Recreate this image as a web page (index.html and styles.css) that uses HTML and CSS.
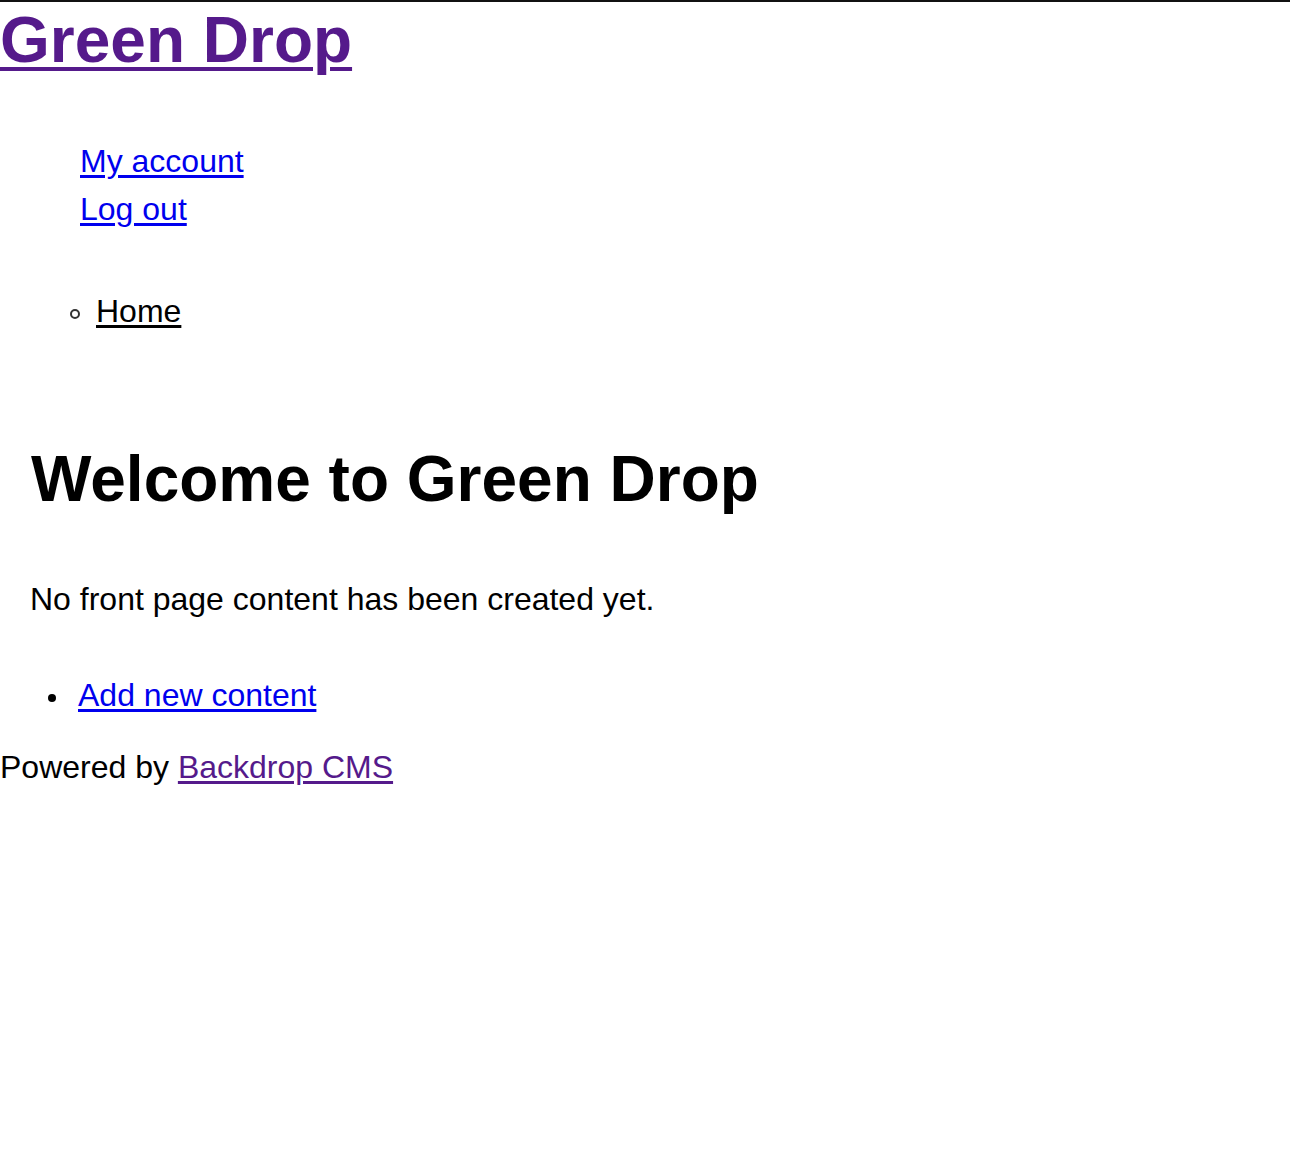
FILE: index.html
```html
<!DOCTYPE html>
<html lang="en">
<head>
<meta charset="utf-8">
<title>Welcome to Green Drop | Green Drop</title>
<link rel="stylesheet" href="styles.css">
</head>
<body>
<header class="site-header">
  <h1 class="site-name"><a href="#" class="visited">Green Drop</a></h1>
  <ul class="user-menu">
    <li><a href="#">My account</a></li>
    <li><a href="#">Log out</a></li>
  </ul>
  <ul class="main-menu">
    <li><a href="#">Home</a></li>
  </ul>
</header>
<main class="content">
  <h2 class="page-title">Welcome to Green Drop</h2>
  <p class="empty">No front page content has been created yet.</p>
  <ul class="actions">
    <li><a href="#">Add new content</a></li>
  </ul>
</main>
<footer class="site-footer">Powered by <a href="#" class="visited">Backdrop CMS</a></footer>
</body>
</html>
```

FILE: styles.css
```css
html { background: #fff; }
body {
  margin: 0;
  border-top: 2px solid #111;
  font-family: "Liberation Sans", Arial, Helvetica, sans-serif;
  font-size: 32px;
  line-height: 48px;
  color: #000;
}
a { color: #0000ee; text-decoration: underline; text-underline-offset: 3px; }
a.visited { color: #551a8b; }

.site-name {
  margin: 0;
  font-size: 64px;
  line-height: 76px;
  font-weight: bold;
}
.site-name a { text-decoration-thickness: 4px; text-underline-offset: 5px; }

.user-menu {
  list-style: none;
  margin: 59px 0 0;
  padding: 0 0 0 80px;
}

.main-menu {
  list-style: none;
  margin: 54px 0 0;
  padding: 0 0 0 70px;
}
.main-menu li::before {
  content: "";
  display: inline-block;
  box-sizing: border-box;
  width: 10px;
  height: 10px;
  border: 2.5px solid #333;
  border-radius: 50%;
  margin-right: 16px;
  vertical-align: middle;
}
.main-menu a { color: #000; }

.content { padding: 0; }
.page-title {
  margin: 106px 0 0;
  padding-left: 31px;
  font-size: 64px;
  line-height: 76px;
  font-weight: bold;
}
.empty {
  margin: 58px 0 0;
  padding-left: 30px;
}
.actions {
  list-style: none;
  margin: 48px 0 0;
  padding: 0 0 0 48px;
}
.actions li::before {
  content: "";
  display: inline-block;
  width: 8px;
  height: 8px;
  background: #000;
  border-radius: 50%;
  margin-right: 22px;
  vertical-align: middle;
}
.site-footer {
  margin-top: 24px;
}
```
